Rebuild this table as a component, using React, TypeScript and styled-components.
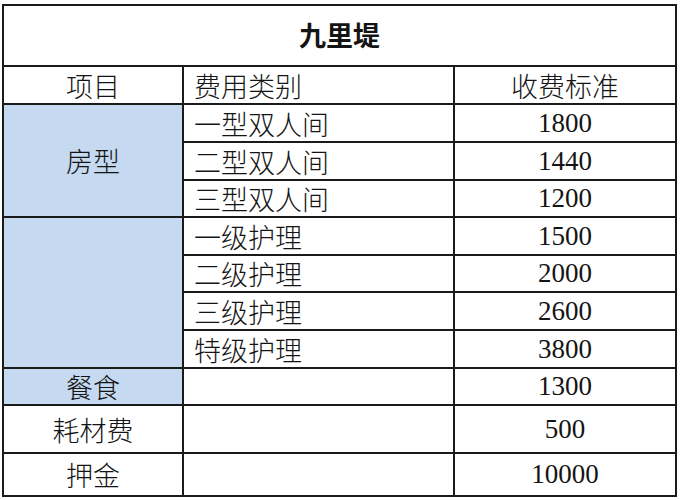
import React from "react";
import styled, { createGlobalStyle } from "styled-components";

const GlobalStyle = createGlobalStyle`
  html, body {
    margin: 0;
    padding: 0;
    background: #ffffff;
  }
  body {
    font-family: "Noto Sans CJK SC", "Liberation Serif", sans-serif;
    color: #141414;
  }
`;

const Sheet = styled.div`
  display: grid;
  grid-template-columns: 178px 269px 220px;
  grid-template-rows: 59px 36px 36px 36px 35px 36px 35px 36px 36px 35px 46px 41px;
  gap: 2px;
  padding: 2px;
  margin: 4px 0 0 2px;
  width: max-content;
  background: #1a1a1a;
`;

const Cell = styled.div<{ $blue?: boolean; $align?: "left" | "center"; $rows?: number }>`
  background: ${(p) => (p.$blue ? "#c5d9f1" : "#ffffff")};
  display: flex;
  align-items: center;
  justify-content: ${(p) => (p.$align === "left" ? "flex-start" : "center")};
  padding-left: ${(p) => (p.$align === "left" ? "10px" : "0")};
  grid-row: ${(p) => (p.$rows ? `span ${p.$rows}` : "auto")};
  font-size: 27px;
  font-weight: 300;
  line-height: 1;
  white-space: nowrap;
`;

const TitleCell = styled.div`
  grid-column: 1 / span 3;
  background: #ffffff;
  display: flex;
  align-items: center;
  justify-content: center;
  font-size: 27px;
  font-weight: 700;
  padding-bottom: 2px;
`;

const Num = styled(Cell)`
  font-family: "Liberation Serif", serif;
  font-weight: 400;
  font-size: 27px;
`;

export default function App() {
  return (
    <>
      <GlobalStyle />
      <Sheet>
        <TitleCell>九里堤</TitleCell>

        <Cell>项目</Cell>
        <Cell $align="left">费用类别</Cell>
        <Cell>收费标准</Cell>

        <Cell $blue $rows={3}>房型</Cell>
        <Cell $align="left">一型双人间</Cell>
        <Num>1800</Num>
        <Cell $align="left">二型双人间</Cell>
        <Num>1440</Num>
        <Cell $align="left">三型双人间</Cell>
        <Num>1200</Num>

        <Cell $blue $rows={4} />
        <Cell $align="left">一级护理</Cell>
        <Num>1500</Num>
        <Cell $align="left">二级护理</Cell>
        <Num>2000</Num>
        <Cell $align="left">三级护理</Cell>
        <Num>2600</Num>
        <Cell $align="left">特级护理</Cell>
        <Num>3800</Num>

        <Cell $blue>餐食</Cell>
        <Cell />
        <Num>1300</Num>

        <Cell>耗材费</Cell>
        <Cell />
        <Num>500</Num>

        <Cell>押金</Cell>
        <Cell />
        <Num>10000</Num>
      </Sheet>
    </>
  );
}
